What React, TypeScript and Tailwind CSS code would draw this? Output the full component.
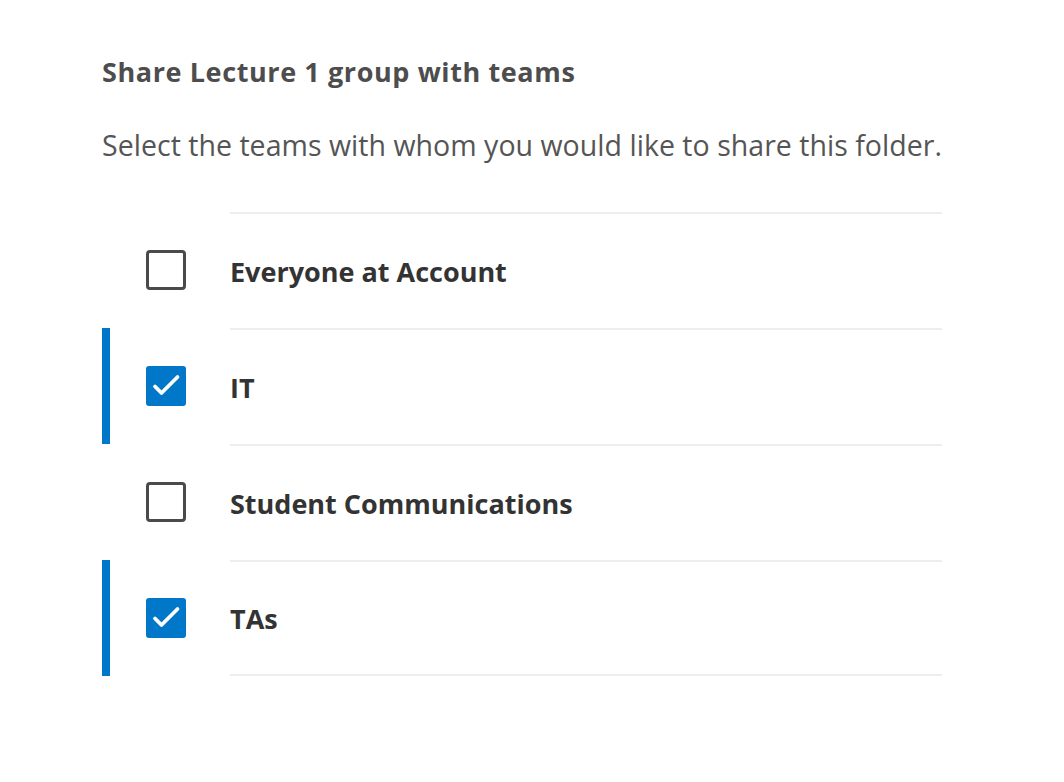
import React from "react";

const teams = [
  { name: "Everyone at Account", checked: false },
  { name: "IT", checked: true },
  { name: "Student Communications", checked: false },
  { name: "TAs", checked: true },
];

function CheckBox({ checked }: { checked: boolean }) {
  if (checked) {
    return (
      <div className="w-[40px] h-[40px] rounded-[3px] bg-[#0077c8]">
        <svg width="40" height="40" viewBox="0 0 40 40" fill="none">
          <path
            d="M9 20.5l6.5 6.5L31.5 11"
            stroke="white"
            strokeWidth="3.8"
            strokeLinecap="round"
            strokeLinejoin="round"
          />
        </svg>
      </div>
    );
  }
  return <div className="w-[40px] h-[40px] rounded-[4px] border-[3px] border-[#4a4a4a] bg-white" />;
}

export default function App() {
  return (
    <div className="min-h-screen bg-white pl-[102px] pt-[55px] font-['Open_Sans',sans-serif]">
      <h2 className="text-[27px] leading-[34px] tracking-[0.6px] font-bold text-[#4d4d4d]">
        Share Lecture 1 group with teams
      </h2>
      <p className="mt-[38px] text-[28.5px] leading-[36px] tracking-[0.03px] text-[#555555]">
        Select the teams with whom you would like to share this folder.
      </p>
      <ul className="mt-[49px] w-[840px]">
        {teams.map((t, i) => (
          <li key={t.name} className="flex h-[116px]">
            <div className={`w-[8px] ${t.checked ? "bg-[#0077c8]" : ""}`} />
            <div className="w-[120px] pl-[36px] flex items-center">
              <CheckBox checked={t.checked} />
            </div>
            <div
              className={`flex-1 flex items-center pt-[2px] border-t-2 border-[#eeeeee] ${
                i === teams.length - 1 ? "border-b-2" : ""
              }`}
            >
              <span className="text-[27px] font-bold text-[#333333]">{t.name}</span>
            </div>
          </li>
        ))}
      </ul>
    </div>
  );
}
